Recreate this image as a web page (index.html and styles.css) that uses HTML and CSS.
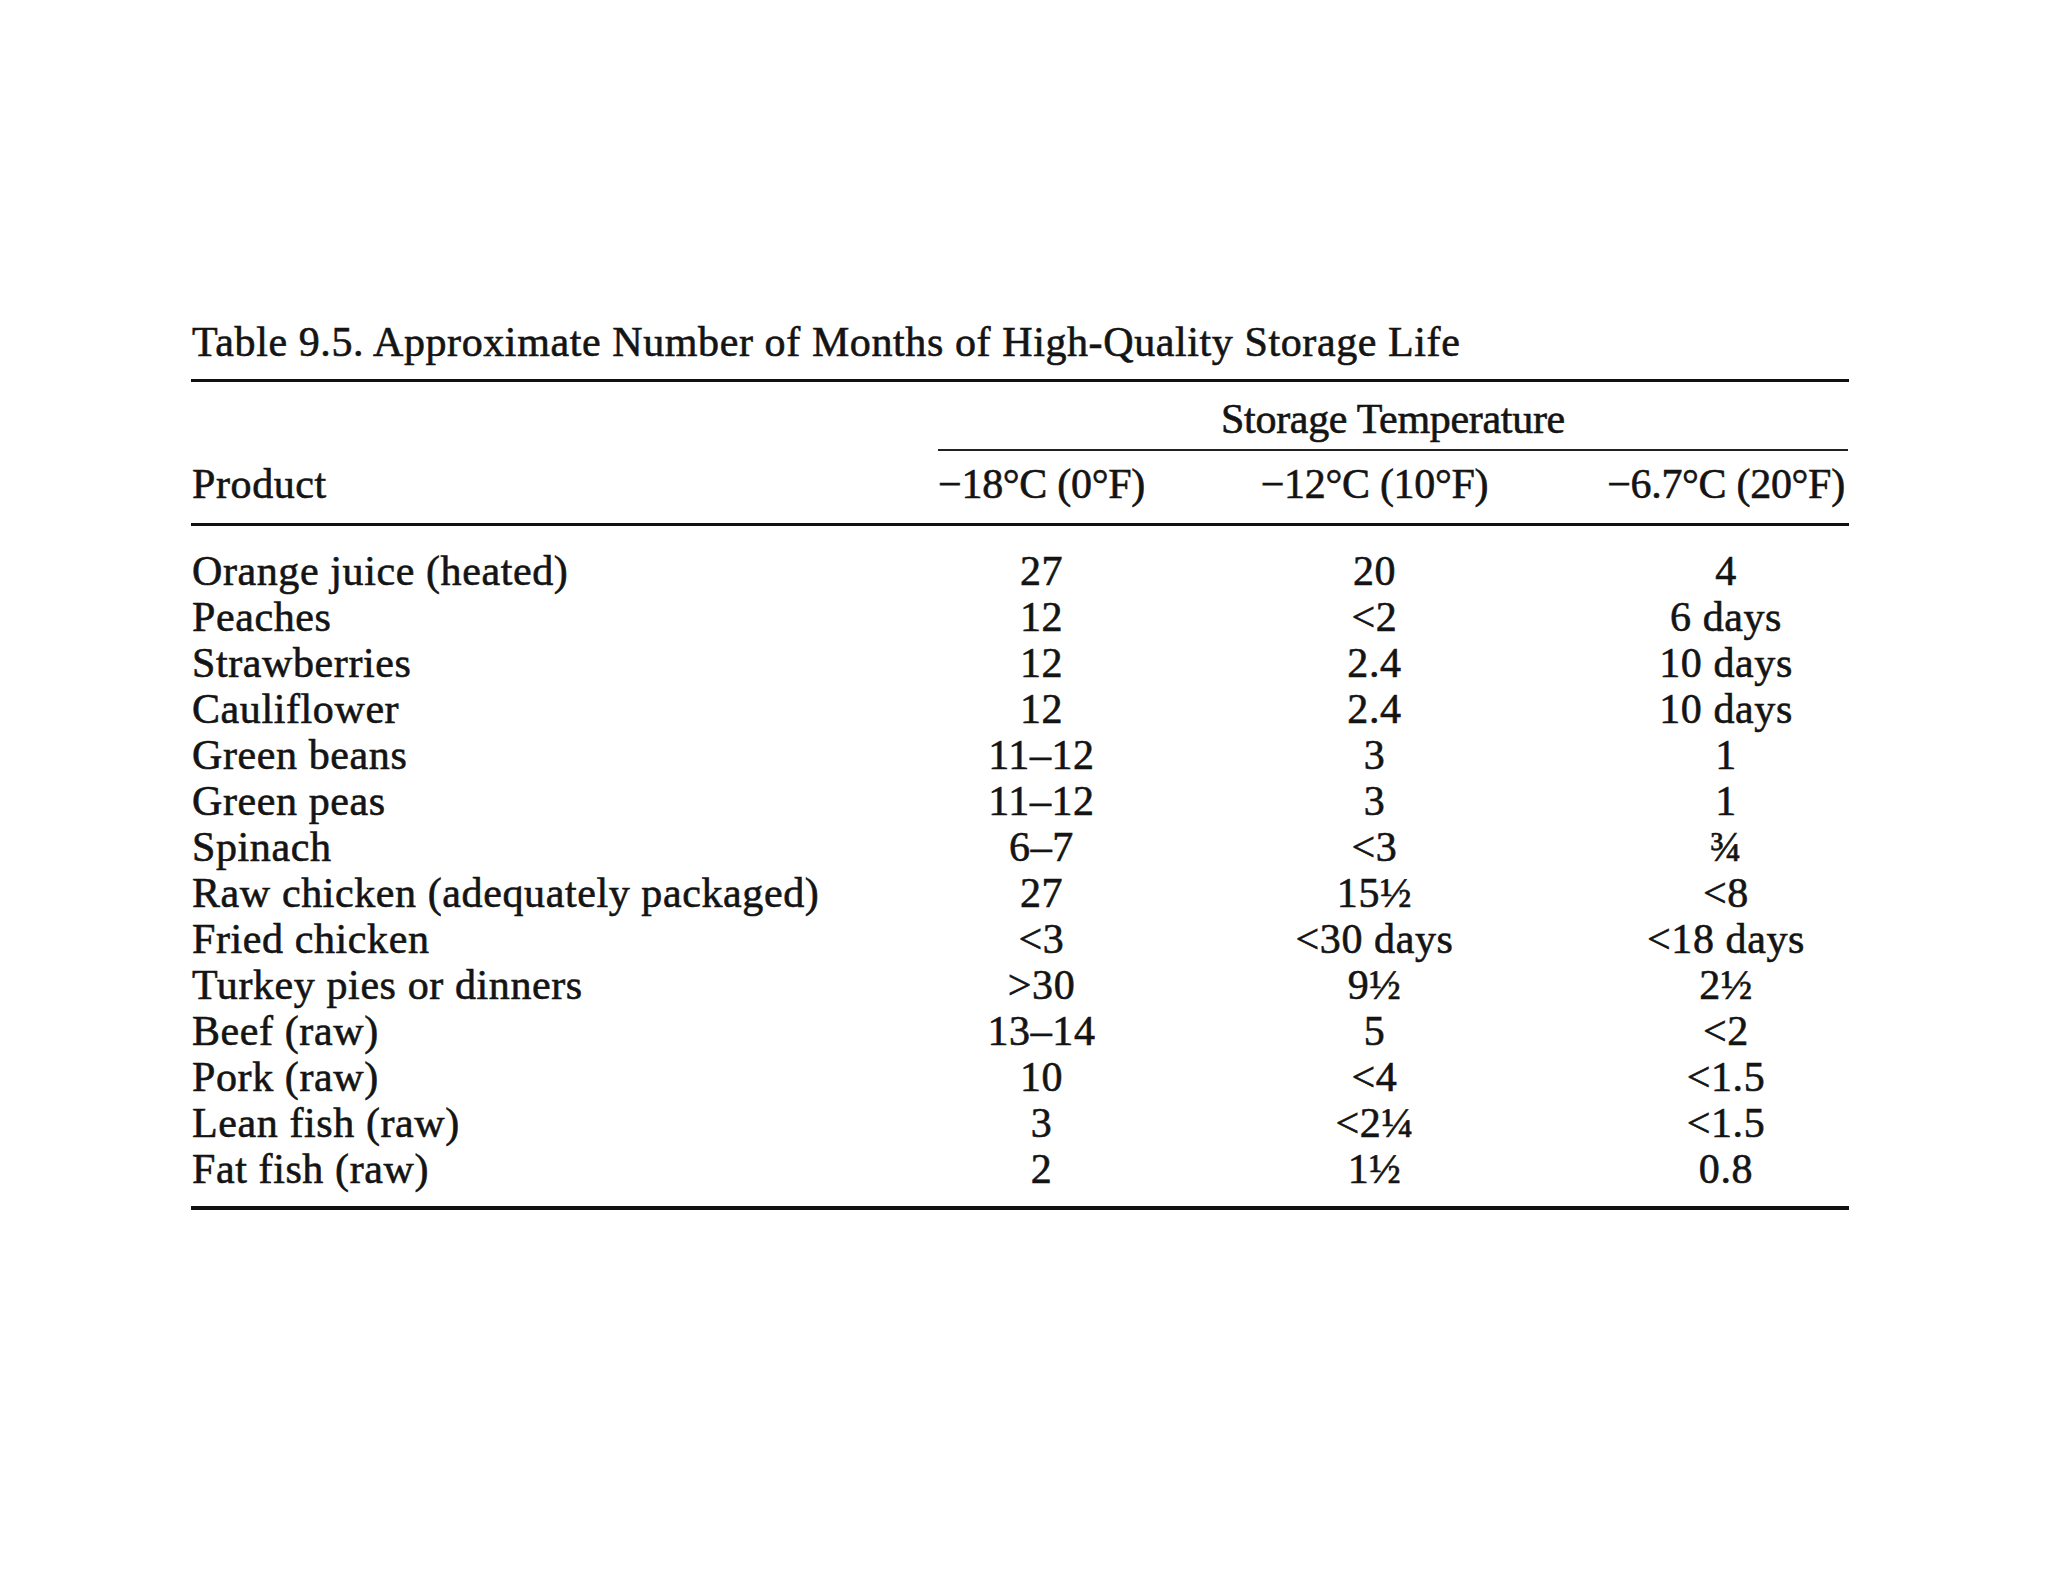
FILE: index.html
```html
<!DOCTYPE html>
<html>
<head>
<meta charset="utf-8">
<link rel="stylesheet" href="styles.css">
</head>
<body>
<div class="page">
  <div class="table">
    <div class="caption">Table 9.5. Approximate Number of Months of High-Quality Storage Life</div>
    <div class="head">
      <div class="grid">
        <div class="span-head">Storage Temperature</div>
        <div class="product">Product</div>
        <div class="col">−18°C (0°F)</div>
        <div class="col">−12°C (10°F)</div>
        <div class="col">−6.7°C (20°F)</div>
      </div>
    </div>
    <div class="body">
      <div class="grid">
        <div class="product">Orange juice (heated)</div><div class="col">27</div><div class="col">20</div><div class="col">4</div>
        <div class="product">Peaches</div><div class="col">12</div><div class="col">&lt;2</div><div class="col">6 days</div>
        <div class="product">Strawberries</div><div class="col">12</div><div class="col">2.4</div><div class="col">10 days</div>
        <div class="product">Cauliflower</div><div class="col">12</div><div class="col">2.4</div><div class="col">10 days</div>
        <div class="product">Green beans</div><div class="col">11–12</div><div class="col">3</div><div class="col">1</div>
        <div class="product">Green peas</div><div class="col">11–12</div><div class="col">3</div><div class="col">1</div>
        <div class="product">Spinach</div><div class="col">6–7</div><div class="col">&lt;3</div><div class="col">¾</div>
        <div class="product">Raw chicken (adequately packaged)</div><div class="col">27</div><div class="col">15½</div><div class="col">&lt;8</div>
        <div class="product">Fried chicken</div><div class="col">&lt;3</div><div class="col">&lt;30 days</div><div class="col">&lt;18 days</div>
        <div class="product">Turkey pies or dinners</div><div class="col">&gt;30</div><div class="col">9½</div><div class="col">2½</div>
        <div class="product">Beef (raw)</div><div class="col">13–14</div><div class="col">5</div><div class="col">&lt;2</div>
        <div class="product">Pork (raw)</div><div class="col">10</div><div class="col">&lt;4</div><div class="col">&lt;1.5</div>
        <div class="product">Lean fish (raw)</div><div class="col">3</div><div class="col">&lt;2¼</div><div class="col">&lt;1.5</div>
        <div class="product">Fat fish (raw)</div><div class="col">2</div><div class="col">1½</div><div class="col">0.8</div>
      </div>
    </div>
  </div>
</div>
</body>
</html>
```

FILE: styles.css
```css
html, body {
  margin: 0;
  padding: 0;
  background: #ffffff;
}
body {
  width: 2048px;
  height: 1582px;
  overflow: hidden;
  font-family: "Liberation Serif", "Times New Roman", serif;
  color: #141414;
}
.page {
  padding-top: 319px;
  padding-left: 191px;
}
.table {
  width: 1658px;
  font-size: 42px;
  line-height: 46px;
  letter-spacing: 0.6px;
  -webkit-text-stroke: 0.6px #141414;
}
.caption {
  padding-left: 1px;
  white-space: nowrap;
}
.head {
  margin-top: 14px;
  border-top: 3px solid #111;
  border-bottom: 3px solid #111;
  padding: 14px 0 16px;
}
.head .col,
.span-head {
  letter-spacing: -0.3px;
}
.grid {
  display: grid;
  grid-template-columns: 632px 207px 229px 244px;
  column-gap: 115px;
  white-space: nowrap;
}
.span-head {
  grid-column: 2 / 5;
  text-align: center;
  border-bottom: 2px solid #222;
  padding-bottom: 7px;
  margin-bottom: 10px;
}
.product {
  padding-left: 1px;
}
.col {
  text-align: center;
}
.body {
  padding: 22px 0 14px;
  border-bottom: 4px solid #111;
}
```
